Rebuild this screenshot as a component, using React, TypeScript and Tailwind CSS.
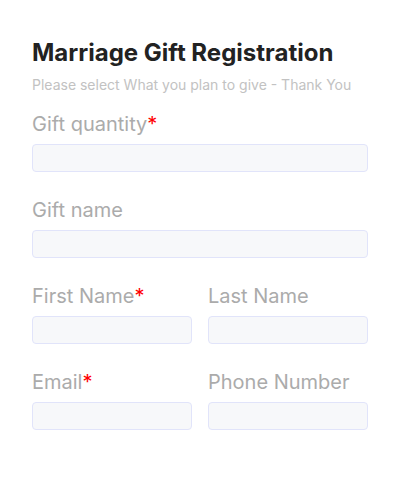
import React from 'react';

const Field: React.FC<{ label: string; required?: boolean }> = ({ label, required }) => (
  <div className="flex flex-col flex-1">
    <label className="text-[20px] leading-6 text-[#ababab]">
      {label}
      {required && <span className="text-[#ff0000]">*</span>}
    </label>
    <input
      type="text"
      className="mt-2 h-7 w-full rounded border border-[#e1e4fa] bg-[#f7f8fa] px-2 outline-none"
    />
  </div>
);

export default function App() {
  return (
    <div className="min-h-[480px] w-[400px] bg-white px-8 pt-[37px] font-['Inter',sans-serif]">
      <h1 className="text-2xl leading-8 font-bold text-[#222222]">Marriage Gift Registration</h1>
      <p className="mt-[6px] text-sm leading-5 text-[#c2c2c2]">
        Please select What you plan to give - Thank You
      </p>

      {/* Form */}
      <div className="mt-[17px] flex flex-col gap-[26px]">
        <Field label="Gift quantity" required />
        <Field label="Gift name" />
        <div className="flex gap-4">
          <Field label="First Name" required />
          <Field label="Last Name" />
        </div>
        <div className="flex gap-4">
          <Field label="Email" required />
          <Field label="Phone Number" />
        </div>
      </div>
    </div>
  );
}
